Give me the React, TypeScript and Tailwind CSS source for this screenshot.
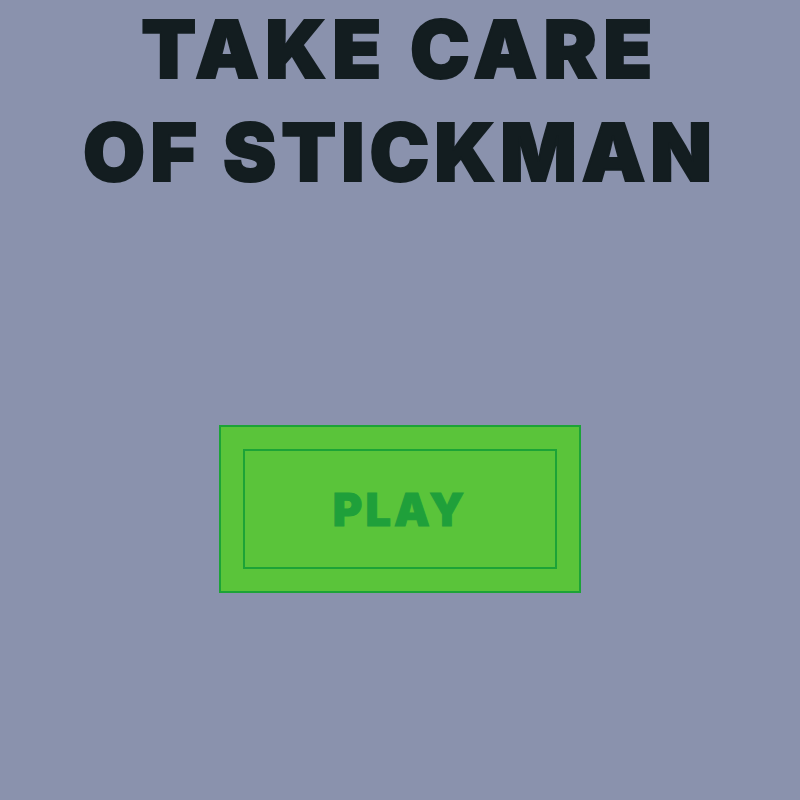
export default function App() {
  return (
    <div className="min-h-[800px] w-full bg-[#8a92ad] flex flex-col items-center font-['Inter',sans-serif]">
      {/* Title */}
      <h1 className="text-center text-[80px] leading-[98px] font-black text-[#131d20] uppercase [-webkit-text-stroke:2px_#131d20]">
        <span className="block tracking-[0.08em]">Take Care</span>
        <span className="block mt-[5px] tracking-[0.063em]">of Stickman</span>
      </h1>

      {/* Start button */}
      <button className="mt-[224px] w-[362px] h-[168px] p-[22px] bg-[#5ac43a] border-2 border-[#1ca337] cursor-pointer">
        <div className="h-full w-full border-2 border-[#1ca337] flex items-center justify-center">
          <span className="text-[45px] font-black tracking-[0.07em] text-[#1fa03a] leading-none [-webkit-text-stroke:1px_#1fa03a]">
            PLAY
          </span>
        </div>
      </button>
    </div>
  );
}
